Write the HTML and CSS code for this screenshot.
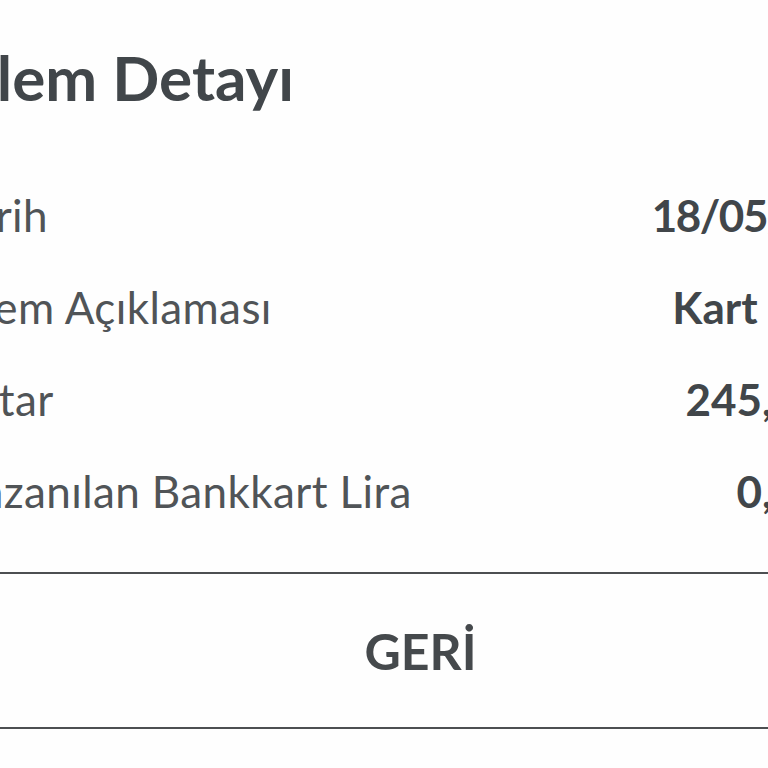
FILE: index.html
```html
<!DOCTYPE html>
<html lang="tr">
<head>
<meta charset="utf-8">
<title>İşlem Detayı</title>
<link rel="stylesheet" href="styles.css">
</head>
<body>
<div class="dialog">
  <h1 class="title">İşlem Detayı</h1>
  <div class="rows">
    <div class="row"><span class="label">Tarih</span><span class="value value-date">18/05/2023</span></div>
    <div class="row"><span class="label">İşlem Açıklaması</span><span class="value">Kart İadesi</span></div>
    <div class="row"><span class="label">Tutar</span><span class="value">245,00 TL</span></div>
    <div class="row"><span class="label">Kazanılan Bankkart Lira</span><span class="value">0,00 TL</span></div>
  </div>
  <button class="back">GERİ</button>
</div>
</body>
</html>
```
FILE: styles.css
```css
html, body {
  margin: 0;
  padding: 0;
  background: #fefefe;
  overflow: hidden;
}
body {
  width: 768px;
  height: 768px;
  font-family: Lato, "Open Sans", sans-serif;
}
.dialog {
  margin-left: -48px;
  width: 937px;
  padding-top: 40px;
}
.title {
  margin: 0;
  font-size: 62px;
  font-weight: 700;
  line-height: 1.2;
  color: #41464a;
}
.rows {
  margin-top: 55px;
  display: flex;
  flex-direction: column;
}
.row {
  display: flex;
  justify-content: space-between;
  align-items: baseline;
  height: 92px;
  line-height: 92px;
  font-size: 44px;
  padding-right: 7px;
}
.label {
  color: #505457;
  font-weight: 400;
  letter-spacing: 0.4px;
}
.value {
  color: #41464a;
  font-weight: 700;
}
.value-date {
  letter-spacing: -1.5px;
}
.back {
  display: block;
  box-sizing: border-box;
  width: 100%;
  height: 157px;
  margin-top: 35px;
  border: 2px solid #4c4f51;
  border-radius: 6px;
  background: #fefefe;
  font-family: Lato, "Open Sans", sans-serif;
  font-size: 50px;
  font-weight: 700;
  color: #45494c;
  padding: 0;
}
```
